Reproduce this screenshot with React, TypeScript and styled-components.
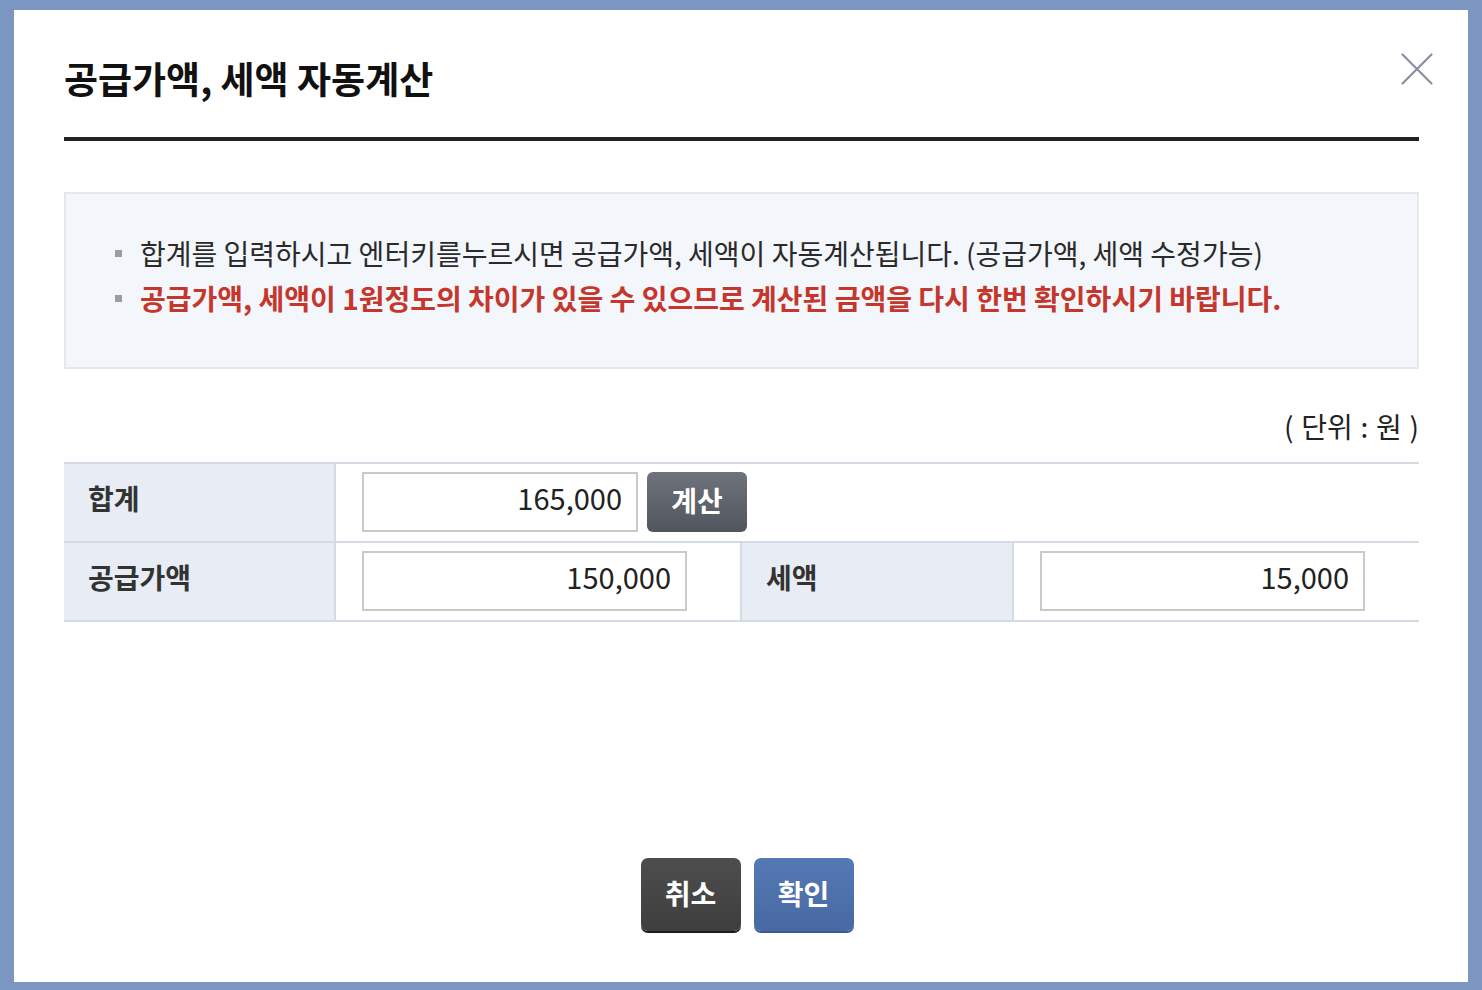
import React from "react";
import styled, { createGlobalStyle } from "styled-components";

const Global = createGlobalStyle`
  html, body { margin: 0; padding: 0; }
  body {
    background: #7b96c0;
    font-family: "Noto Sans CJK KR", "Noto Sans", sans-serif;
  }
  * { box-sizing: border-box; }
`;

const Frame = styled.div`
  width: 1482px;
  height: 990px;
  padding: 10px 14px 8px 14px;
  background: #7b96c0;
`;

const Dialog = styled.div`
  position: relative;
  width: 100%;
  height: 100%;
  background: #ffffff;
  padding: 0 49px 0 50px;
  display: flex;
  flex-direction: column;
`;

const Header = styled.div`
  height: 131px;
  display: flex;
  align-items: flex-end;
  border-bottom: 4px solid #222;
  padding-bottom: 40px;
`;

const Title = styled.h1`
  margin: 0;
  font-size: 37px;
  font-weight: 700;
  letter-spacing: 0;
  color: #111;
  line-height: 1;
`;

const Close = styled.button`
  position: absolute;
  top: 43px;
  right: 35px;
  width: 32px;
  height: 32px;
  padding: 0;
  border: 0;
  background: none;
  cursor: pointer;
`;

const InfoBox = styled.div`
  margin-top: 51px;
  height: 177px;
  background: #f3f6fb;
  border: 2px solid #e3e7ee;
  padding: 42px 0 0 49px;
  display: flex;
  flex-direction: column;
  gap: 11px;
`;

const InfoLine = styled.div<{ $warn?: boolean }>`
  display: flex;
  align-items: center;
  font-size: 28px;
  letter-spacing: 0;
  line-height: 34px;
  font-weight: ${(p) => (p.$warn ? 700 : 400)};
  color: ${(p) => (p.$warn ? "#c5362c" : "#2a2a2a")};
  &::before {
    content: "";
    width: 7px;
    height: 7px;
    background: #9c9c9c;
    margin-right: 18px;
    flex: none;
  }
`;

const Unit = styled.div`
  margin-top: 40px;
  text-align: right;
  font-size: 28px;
  word-spacing: 1.5px;
  color: #222;
  line-height: 34px;
  height: 53px;
`;

const Table = styled.div`
  display: grid;
  grid-template-columns: 272px 406px 272px 1fr;
  border-top: 2px solid #d5dbe5;
`;

const Th = styled.div`
  height: 79px;
  background: #e8ecf4;
  border-right: 2px solid #d5dbe5;
  border-bottom: 2px solid #d5dbe5;
  padding-left: 24px;
  padding-bottom: 10px;
  display: flex;
  align-items: center;
  font-size: 28px;
  font-weight: 700;
  color: #333;
`;

const Td = styled.div<{ $span?: number; $last?: boolean }>`
  grid-column: span ${(p) => p.$span ?? 1};
  height: 79px;
  border-bottom: 2px solid #d5dbe5;
  border-right: ${(p) => (p.$last ? "0" : "2px solid #d5dbe5")};
  padding: 8px 0 0 26px;
  display: flex;
  align-items: flex-start;
  gap: 9px;
`;

const Input = styled.input<{ $w: number }>`
  width: ${(p) => p.$w}px;
  height: 60px;
  border: 2px solid #c9c9c9;
  background: #fff;
  text-align: right;
  padding: 0 14px 10px 0;
  font-family: "Noto Sans CJK KR", "Noto Sans", sans-serif;
  font-size: 29px;
  color: #222;
  outline: none;
`;

const CalcButton = styled.button`
  width: 100px;
  height: 60px;
  border: 0;
  border-radius: 6px;
  background: linear-gradient(#6e737c, #50555e);
  color: #fff;
  font-family: "Noto Sans CJK KR", "Noto Sans", sans-serif;
  font-size: 28px;
  font-weight: 700;
  padding-bottom: 6px;
  cursor: pointer;
`;

const Footer = styled.div`
  margin-top: auto;
  margin-bottom: 51px;
  display: flex;
  justify-content: center;
  gap: 13px;
  padding-left: 11px;
`;

const ActionButton = styled.button<{ $primary?: boolean }>`
  width: 100px;
  height: 73px;
  border: 0;
  border-radius: 7px;
  background: ${(p) =>
    p.$primary
      ? "linear-gradient(#5479b4, #4869a3)"
      : "linear-gradient(#4d4d4d, #3e3e3e)"};
  box-shadow: ${(p) =>
    p.$primary ? "0 2px 0 #3b5a91" : "0 2px 0 #1c1c1c"};
  color: #fff;
  font-family: "Noto Sans CJK KR", "Noto Sans", sans-serif;
  font-size: 28px;
  font-weight: 700;
  padding-bottom: 4px;
  cursor: pointer;
`;

export default function App() {
  return (
    <>
      <Global />
      <Frame>
        <Dialog>
          <Header>
            <Title>공급가액, 세액 자동계산</Title>
          </Header>
          <Close aria-label="닫기">
            <svg width="32" height="32" viewBox="0 0 32 32">
              <path
                d="M1.5 1.5 L30.5 30.5 M30.5 1.5 L1.5 30.5"
                stroke="#8990a6"
                strokeWidth="2.2"
                strokeLinecap="round"
              />
            </svg>
          </Close>
          <InfoBox>
            <InfoLine>
              합계를 입력하시고 엔터키를누르시면 공급가액, 세액이 자동계산됩니다. (공급가액, 세액 수정가능)
            </InfoLine>
            <InfoLine $warn>
              공급가액, 세액이 1원정도의 차이가 있을 수 있으므로 계산된 금액을 다시 한번 확인하시기 바랍니다.
            </InfoLine>
          </InfoBox>
          <Unit>( 단위 : 원 )</Unit>
          <Table>
            <Th>합계</Th>
            <Td $span={3} $last>
              <Input $w={276} defaultValue="165,000" />
              <CalcButton>계산</CalcButton>
            </Td>
            <Th>공급가액</Th>
            <Td>
              <Input $w={325} defaultValue="150,000" />
            </Td>
            <Th>세액</Th>
            <Td $last>
              <Input $w={325} defaultValue="15,000" />
            </Td>
          </Table>
          <Footer>
            <ActionButton>취소</ActionButton>
            <ActionButton $primary>확인</ActionButton>
          </Footer>
        </Dialog>
      </Frame>
    </>
  );
}
